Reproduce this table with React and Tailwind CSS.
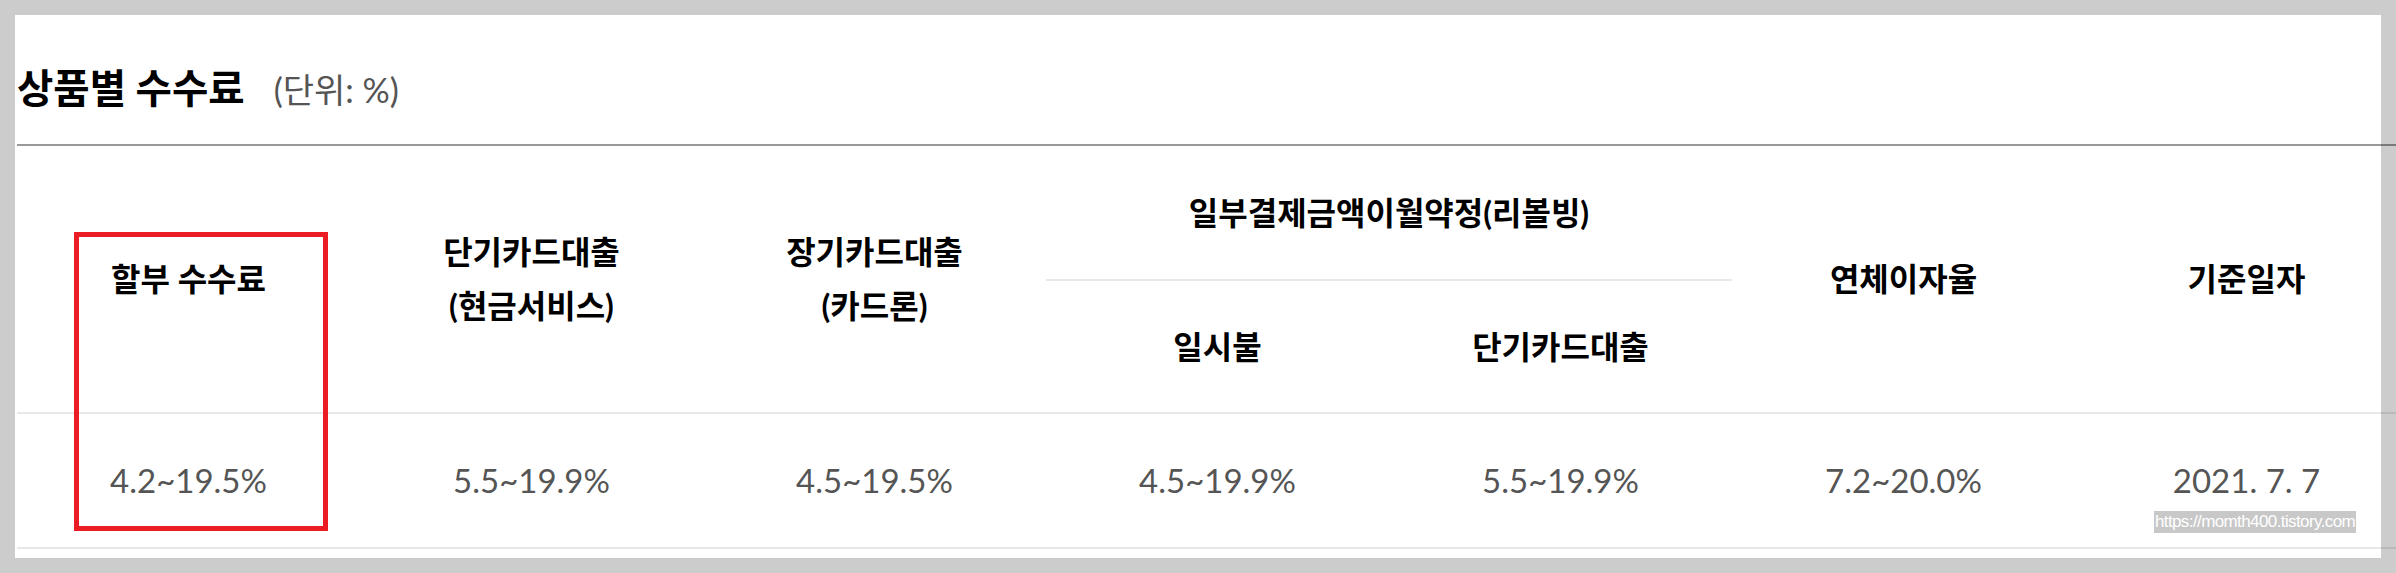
const headCell = 'p-0 text-center align-middle text-[32px] font-bold text-black'
const dataCell = 'p-0 text-center align-middle text-[33px] text-[#555] border-b-2 border-[#e8e8e8]'

const rates = ['4.2~19.5%', '5.5~19.9%', '4.5~19.5%', '4.5~19.9%', '5.5~19.9%', '7.2~20.0%', '2021. 7. 7']

function App() {
  return (
    <div className="relative h-[573px] w-[2396px] overflow-hidden bg-white font-['Lato','Noto_Sans_CJK_KR',sans-serif]">
      <div className="pl-[17px]">
        <div className="flex h-[144px] items-center pt-[32px]">
          <div className="flex items-baseline">
            <h2 className="text-[39.5px] leading-none font-bold text-black">상품별 수수료</h2>
            <span className="ml-[29px] text-[34px] leading-none text-[#555]">(단위: %)</span>
          </div>
        </div>
        <div className="h-[2px] bg-[#999]" />

        <table className="w-[2401px] table-fixed border-separate border-spacing-0">
          <thead>
            <tr className="h-[135px]">
              <th rowSpan={2} className={`${headCell} border-b-2 border-[#e8e8e8]`}>
                할부 수수료
              </th>
              <th rowSpan={2} className={`${headCell} border-b-2 border-[#e8e8e8] leading-[54px]`}>
                단기카드대출
                <br />
                (현금서비스)
              </th>
              <th rowSpan={2} className={`${headCell} border-b-2 border-[#e8e8e8] leading-[54px]`}>
                장기카드대출
                <br />
                (카드론)
              </th>
              <th colSpan={2} className={`${headCell} border-b-2 border-[#e8e8e8]`}>
                일부결제금액이월약정(리볼빙)
              </th>
              <th rowSpan={2} className={`${headCell} border-b-2 border-[#e8e8e8]`}>
                연체이자율
              </th>
              <th rowSpan={2} className={`${headCell} border-b-2 border-[#e8e8e8]`}>
                기준일자
              </th>
            </tr>
            <tr className="h-[133px]">
              <th className={`${headCell} border-b-2 border-[#e8e8e8]`}>일시불</th>
              <th className={`${headCell} border-b-2 border-[#e8e8e8]`}>단기카드대출</th>
            </tr>
          </thead>
          <tbody>
            <tr className="h-[135px]">
              {rates.map((rate, i) => (
                <td key={i} className={dataCell}>
                  {rate}
                </td>
              ))}
            </tr>
          </tbody>
        </table>
      </div>

      {/* red highlight box */}
      <div className="pointer-events-none absolute top-[232px] left-[74px] h-[299px] w-[254px] border-[5px] border-[#ec1c24]" />

      {/* blog watermark */}
      <div className="absolute top-[511px] left-[2154px] flex h-[22px] w-[202px] items-center justify-center bg-[#c8c8c8] font-['Liberation_Sans',sans-serif] text-[17px] tracking-[-0.6px] text-white">
        https://momth400.tistory.com
      </div>

      {/* screenshot frame */}
      <div className="pointer-events-none absolute inset-0 border-[15px] border-black/20" />
    </div>
  )
}

export default App
